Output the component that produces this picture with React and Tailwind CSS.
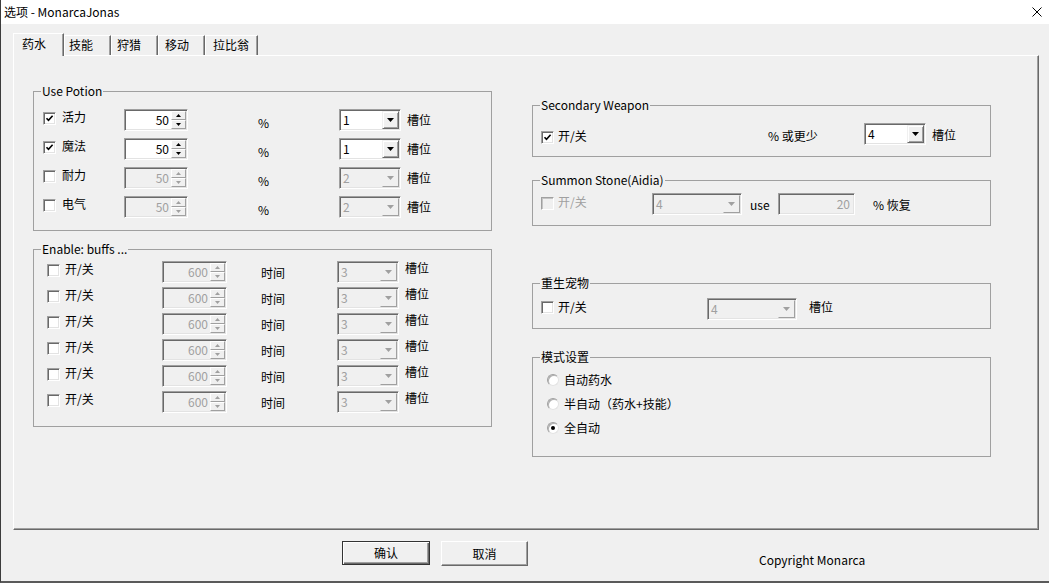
import React from 'react'

function Check({ checked, disabled }) {
  return (
    <span
      className={`flex h-[13px] w-[13px] shrink-0 items-center justify-center border border-t-[#a0a0a0] border-l-[#a0a0a0] border-b-white border-r-white ${
        disabled
          ? 'bg-[#f0f0f0] shadow-[inset_1px_1px_0_#c4c4c4]'
          : 'bg-white shadow-[inset_1px_1px_0_#696969,inset_-1px_-1px_0_#e3e3e3]'
      }`}
    >
      {checked && (
        <svg width="9" height="9" viewBox="0 0 9 9">
          <path d="M1.5 4.2 L3.5 6.4 L7.6 1.8" fill="none" stroke="#000" strokeWidth="1.6" />
        </svg>
      )}
    </span>
  )
}

function Radio({ selected }) {
  return (
    <span className="flex h-[12px] w-[12px] shrink-0 items-center justify-center rounded-full border border-t-[#a0a0a0] border-l-[#a0a0a0] border-b-[#e3e3e3] border-r-[#e3e3e3] bg-white shadow-[inset_1px_1px_0_#b0b0b0]">
      {selected && <span className="h-[4px] w-[4px] rounded-full bg-black" />}
    </span>
  )
}

function SpinArrow({ up, disabled }) {
  return (
    <div className="flex h-[9px] items-center justify-center border border-t-white border-l-white border-b-[#a0a0a0] border-r-[#a0a0a0] bg-[#f0f0f0]">
      <svg width="5" height="3" viewBox="0 0 5 3">
        <path d={up ? 'M0 3 L2.5 0 L5 3 Z' : 'M0 0 L5 0 L2.5 3 Z'} fill={disabled ? '#a0a0a0' : '#000'} />
      </svg>
    </div>
  )
}

function Spin({ value, disabled, wide }) {
  return (
    <div
      className={`flex h-[22px] shrink-0 border border-t-[#a0a0a0] border-l-[#a0a0a0] border-b-white border-r-white p-[1px] shadow-[inset_1px_1px_0_#696969,inset_-1px_-1px_0_#e3e3e3] ${
        wide ? 'w-[65px]' : 'w-[64px]'
      } ${disabled ? 'bg-[#f0f0f0] text-[#a0a0a0]' : 'bg-white text-black'}`}
    >
      <div className="flex-1 pr-[2px] text-right leading-[18px]">{value}</div>
      <div className="flex w-[15px] flex-col">
        <SpinArrow up disabled={disabled} />
        <SpinArrow disabled={disabled} />
      </div>
    </div>
  )
}

function Combo({ value, disabled, w }) {
  return (
    <div
      className={`flex h-[22px] shrink-0 border border-t-[#a0a0a0] border-l-[#a0a0a0] border-b-white border-r-white p-[1px] shadow-[inset_1px_1px_0_#696969,inset_-1px_-1px_0_#e3e3e3] ${w} ${
        disabled ? 'bg-[#f0f0f0] text-[#a0a0a0]' : 'bg-white text-black'
      }`}
    >
      <div className="flex-1 pl-[2px] leading-[18px]">{value}</div>
      <div
        className={`flex w-[17px] items-center justify-center border bg-[#f0f0f0] ${
          disabled
            ? 'border-t-[#f0f0f0] border-l-[#f0f0f0] border-b-[#a0a0a0] border-r-[#a0a0a0]'
            : 'border-t-[#f0f0f0] border-l-[#f0f0f0] border-b-[#696969] border-r-[#696969] shadow-[inset_1px_1px_0_#fff,inset_-1px_-1px_0_#a0a0a0]'
        }`}
      >
        <svg width="7" height="4" viewBox="0 0 7 4">
          <path d="M0 0 L7 0 L3.5 4 Z" fill={disabled ? '#a0a0a0' : '#000'} />
        </svg>
      </div>
    </div>
  )
}

function Group({ title, className, children }) {
  return (
    <div className={`border border-[#a0a0a0] ${className}`}>
      <div className="-mt-[8px] ml-[7px] w-fit bg-[#f0f0f0] px-[1px] leading-[14px]">{title}</div>
      {children}
    </div>
  )
}

const potions = [
  { name: '活力', checked: true, on: true, slot: '1' },
  { name: '魔法', checked: true, on: true, slot: '1' },
  { name: '耐力', checked: false, on: false, slot: '2' },
  { name: '电气', checked: false, on: false, slot: '2' },
]

const tabs = [
  { label: '技能', cls: 'w-[47px] pl-[4px]' },
  { label: '狩猎', cls: 'w-[47px] pl-[5px]' },
  { label: '移动', cls: 'w-[47px] pl-[6px]' },
  { label: '拉比翁', cls: 'w-[53px] pl-[7px]' },
]

export default function App() {
  return (
    <div className="flex h-[583px] w-[1049px] flex-col overflow-hidden border-l border-b-2 border-l-[#3c3c3c] border-b-[#5a5a5a] bg-[#f0f0f0] text-[12px] text-black [font-family:'Noto_Sans_CJK_SC','Noto_Sans',sans-serif]">
      {/* title bar */}
      <div className="flex h-[24px] shrink-0 items-center justify-between bg-white pl-[3px] pr-[7px]">
        <span className="leading-[16px]">选项 - MonarcaJonas</span>
        <svg width="10" height="10" viewBox="0 0 10 10">
          <path d="M0.5 0.5 L9.5 9.5 M9.5 0.5 L0.5 9.5" stroke="#000" strokeWidth="1" />
        </svg>
      </div>

      {/* tabs */}
      <div className="ml-[12px] mt-[9px] flex h-[22px] shrink-0 items-end">
        <div className="relative z-10 -mb-[1px] h-[23px] w-[51px] border-t border-l border-r border-t-white border-l-white border-r-[#696969] bg-[#f0f0f0] pl-[8px] leading-[20px] shadow-[inset_-1px_0_0_#a0a0a0]">
          药水
        </div>
        {tabs.map((t) => (
          <div
            key={t.label}
            className={`h-[20px] border-t border-l border-r border-t-white border-l-white border-r-[#696969] leading-[18px] shadow-[inset_-1px_0_0_#a0a0a0] ${t.cls}`}
          >
            {t.label}
          </div>
        ))}
      </div>

      {/* tab panel */}
      <div className="ml-[12px] flex h-[475px] w-[1026px] shrink-0 border-t border-l border-r border-b border-t-white border-l-white border-r-[#696969] border-b-[#696969] pl-[19px] shadow-[inset_-1px_-1px_0_#a0a0a0]">
        {/* left column */}
        <div className="flex w-[459px] flex-col pt-[35px]">
          <Group title="Use Potion" className="h-[140px]">
            <div className="mt-[11px] flex flex-col gap-[7px]">
              {potions.map((p) => (
                <div key={p.name} className="flex h-[22px] items-start">
                  <div className="flex w-[90px] items-start pl-[9px]">
                    <span className="mt-[3px]">
                      <Check checked={p.checked} />
                    </span>
                    <span className="ml-[6px] leading-[16px]">{p.name}</span>
                  </div>
                  <Spin value="50" disabled={!p.on} />
                  <div className="mt-[6px] w-[151px] pl-[70px] leading-[16px]">%</div>
                  <Combo value={p.slot} disabled={!p.on} w="w-[62px]" />
                  <span className="ml-[6px] mt-[3px] leading-[16px]">槽位</span>
                </div>
              ))}
            </div>
          </Group>

          <Group title="Enable: buffs ..." className="mt-[18px] h-[178px]">
            <div className="mt-[5px] flex flex-col gap-[4px]">
              {[0, 1, 2, 3, 4, 5].map((i) => (
                <div key={i} className="flex h-[22px] items-start">
                  <div className="flex w-[128px] items-start pl-[13px]">
                    <span className="mt-[3px]">
                      <Check />
                    </span>
                    <span className="ml-[5px] leading-[16px]">开/关</span>
                  </div>
                  <Spin value="600" disabled wide />
                  <div className="mt-[4px] w-[110px] pl-[34px] leading-[16px]">时间</div>
                  <Combo value="3" disabled w="w-[62px]" />
                  <span className="-mt-[1px] ml-[6px] leading-[16px]">槽位</span>
                </div>
              ))}
            </div>
          </Group>
        </div>

        {/* right column */}
        <div className="ml-[40px] flex w-[459px] flex-col pt-[49px]">
          <Group title="Secondary Weapon" className="h-[52px]">
            <div className="mt-[11px] flex items-start">
              <div className="flex w-[235px] items-start pl-[8px]">
                <span className="mt-[8px]">
                  <Check checked />
                </span>
                <span className="ml-[4px] mt-[5px] leading-[16px]">开/关</span>
              </div>
              <div className="mt-[5px] w-[96px] leading-[16px]">% 或更少</div>
              <Combo value="4" w="w-[62px]" />
              <span className="ml-[6px] mt-[4px] leading-[16px]">槽位</span>
            </div>
          </Group>

          <Group title="Summon Stone(Aidia)" className="mt-[23px] h-[46px]">
            <div className="mt-[6px] flex items-start">
              <div className="flex w-[119px] items-start pl-[8px]">
                <span className="mt-[4px]">
                  <Check disabled />
                </span>
                <span className="ml-[4px] mt-[1px] leading-[16px] text-[#a0a0a0]">开/关</span>
              </div>
              <Combo value="4" disabled w="w-[90px]" />
              <div className="mt-[4px] w-[36px] pl-[8px] leading-[16px]">use</div>
              <div className="h-[22px] w-[77px] border border-t-[#a0a0a0] border-l-[#a0a0a0] border-b-white border-r-white bg-[#f0f0f0] pr-[4px] text-right leading-[20px] text-[#a0a0a0] shadow-[inset_1px_1px_0_#696969,inset_-1px_-1px_0_#e3e3e3]">
                20
              </div>
              <div className="mt-[4px] pl-[18px] leading-[16px]">% 恢复</div>
            </div>
          </Group>

          <Group title="重生宠物" className="mt-[57px] h-[46px]">
            <div className="mt-[8px] flex items-start">
              <div className="flex w-[174px] items-start pl-[8px]">
                <span className="mt-[3px]">
                  <Check />
                </span>
                <span className="ml-[4px] mt-[1px] leading-[16px]">开/关</span>
              </div>
              <Combo value="4" disabled w="w-[90px]" />
              <span className="ml-[12px] mt-[1px] leading-[16px]">槽位</span>
            </div>
          </Group>

          <Group title="模式设置" className="mt-[28px] h-[100px]">
            <div className="mt-[8px] flex flex-col gap-[8px]">
              {[
                { t: '自动药水', s: false },
                { t: '半自动（药水+技能）', s: false },
                { t: '全自动', s: true },
              ].map((r) => (
                <div key={r.t} className="flex h-[16px] items-center pl-[14px]">
                  <Radio selected={r.s} />
                  <span className="ml-[5px] leading-[16px]">{r.t}</span>
                </div>
              ))}
            </div>
          </Group>
        </div>
      </div>

      {/* dialog buttons */}
      <div className="mt-[11px] flex items-start pl-[341px]">
        <button className="h-[24px] w-[88px] border border-[#333] bg-[#f0f0f0] leading-[20px] shadow-[inset_1px_1px_0_#fff,inset_-1px_-1px_0_#696969,inset_-2px_-2px_0_#a0a0a0]">
          确认
        </button>
        <button className="ml-[11px] h-[25px] w-[87px] border border-t-white border-l-white border-b-[#696969] border-r-[#696969] bg-[#f0f0f0] leading-[21px] shadow-[inset_-1px_-1px_0_#a0a0a0]">
          取消
        </button>
        <span className="ml-[231px] mt-[11px] leading-[16px]">Copyright Monarca</span>
      </div>
    </div>
  )
}
